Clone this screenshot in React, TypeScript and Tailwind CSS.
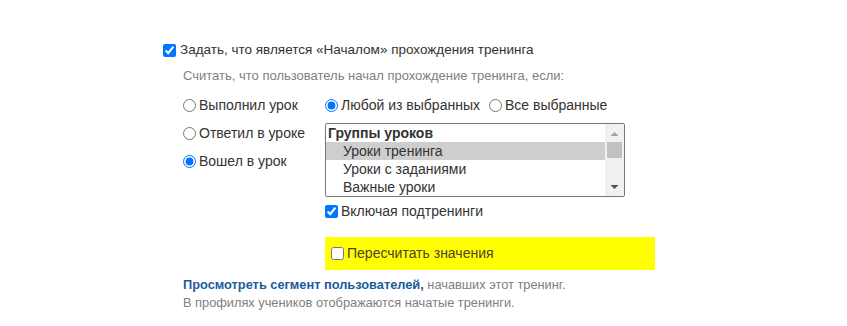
import { useState } from 'react';

const lessonGroups = [
  { id: 'training', name: 'Уроки тренинга' },
  { id: 'tasks', name: 'Уроки с заданиями' },
  { id: 'important', name: 'Важные уроки' },
];

export default function App() {
  const [start, setStart] = useState('visit');
  const [mode, setMode] = useState('any');
  const [selected, setSelected] = useState('training');

  return (
    <div className="min-h-screen bg-white text-[#333] text-[14px]" style={{ fontFamily: '"Liberation Sans", Arial, sans-serif' }}>
      <div className="w-[521px] mx-auto pt-[43px]">
        <label className="flex items-center gap-[4px] h-[15px]">
          <input type="checkbox" defaultChecked className="m-0 w-[13px] h-[13px]" />
          <span className="text-[13.5px]">Задать, что является «Началом» прохождения тренинга</span>
        </label>

        <div className="pl-[20px]">
          <p className="mt-[10px] text-[13px] text-[#808080] leading-[16px]">
            Считать, что пользователь начал прохождение тренинга, если:
          </p>

          <div className="flex mt-[14px]">
            <div className="w-[142px] flex flex-col gap-[13px]">
              {[
                ['done', 'Выполнил урок'],
                ['answer', 'Ответил в уроке'],
                ['visit', 'Вошел в урок'],
              ].map(([id, text]) => (
                <label key={id} className="flex items-center gap-[3px] h-[15px]">
                  <input
                    type="radio"
                    name="start"
                    checked={start === id}
                    onChange={() => setStart(id)}
                    className="m-0 w-[13px] h-[13px]"
                  />
                  <span>{text}</span>
                </label>
              ))}
            </div>

            <div className="flex flex-col">
              <div className="flex items-center h-[15px]">
                <label className="flex items-center gap-[3px]">
                  <input
                    type="radio"
                    name="mode"
                    checked={mode === 'any'}
                    onChange={() => setMode('any')}
                    className="m-0 w-[13px] h-[13px]"
                  />
                  <span>Любой из выбранных</span>
                </label>
                <label className="flex items-center gap-[3px] ml-[9px]">
                  <input
                    type="radio"
                    name="mode"
                    checked={mode === 'all'}
                    onChange={() => setMode('all')}
                    className="m-0 w-[13px] h-[13px]"
                  />
                  <span>Все выбранные</span>
                </label>
              </div>

              {/* listbox */}
              <div className="mt-[10px] w-[300px] h-[74px] border border-[#767676] rounded-[2px] flex overflow-hidden">
                <div className="flex-1 flex flex-col">
                  <div className="h-[18px] leading-[18px] pl-[2px] font-bold">Группы уроков</div>
                  {lessonGroups.map((g) => (
                    <div
                      key={g.id}
                      onClick={() => setSelected(g.id)}
                      className={`h-[18px] leading-[18px] pl-[17px] cursor-default ${selected === g.id ? 'bg-[#cecece]' : ''}`}
                    >
                      {g.name}
                    </div>
                  ))}
                </div>
                <div className="w-[19px] bg-[#f1f1f1] flex flex-col items-center">
                  <svg width="19" height="17" viewBox="0 0 19 17" className="mt-[1px]">
                    <path d="M5.5 11 L9.5 7 L13.5 11 Z" fill="#a3a3a3" />
                  </svg>
                  <div className="w-[15px] h-[16px] bg-[#c1c1c1]" />
                  <div className="flex-1" />
                  <svg width="19" height="17" viewBox="0 0 19 17">
                    <path d="M5.5 6 L9.5 10 L13.5 6 Z" fill="#505050" />
                  </svg>
                </div>
              </div>

              <label className="flex items-center gap-[3px] mt-[7px] h-[15px]">
                <input type="checkbox" defaultChecked className="m-0 w-[13px] h-[13px]" />
                <span>Включая подтренинги</span>
              </label>

              <div className="mt-[18px] w-[330px] h-[33px] bg-[#ffff00] flex items-center pl-[6px]">
                <label className="flex items-center gap-[3px]">
                  <input type="checkbox" className="m-0 w-[13px] h-[13px]" />
                  <span className="text-[#50402e]">Пересчитать значения</span>
                </label>
              </div>
            </div>
          </div>

          <div className="mt-[6px] text-[12.8px] leading-[18px] text-[#808080]">
            <p>
              <a href="#" className="font-bold text-[#1b5c9a]">Просмотреть сегмент пользователей,</a> начавших этот тренинг.
            </p>
            <p>В профилях учеников отображаются начатые тренинги.</p>
          </div>
        </div>
      </div>
    </div>
  );
}
